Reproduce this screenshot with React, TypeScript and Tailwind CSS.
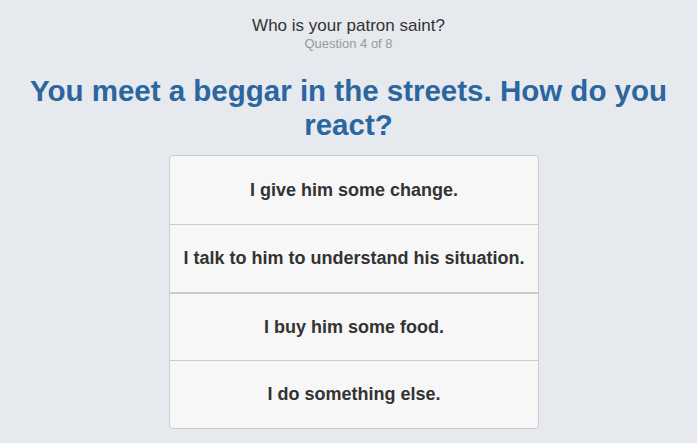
import React from 'react';

const answers = [
  "I give him some change.",
  "I talk to him to understand his situation.",
  "I buy him some food.",
  "I do something else.",
];

const App: React.FC = () => {
  return (
    <div className="min-h-[443px] bg-[#e6e9ee] font-['Liberation_Sans',Arial,sans-serif] text-[#333]">
      <div className="flex flex-col items-center pt-[16px]">
        <div className="text-[17px] leading-[20px]">Who is your patron saint?</div>
        <div className="text-[13px] leading-[16px] text-[#999]">Question 4 of 8</div>
      </div>
      <h2 className="mt-[22px] px-[20px] text-center text-[29.5px] font-bold leading-[34px] text-[#2b66a0]">
        You meet a beggar in the streets. How do you react?
      </h2>
      <div className="ml-[169px] mt-[13px] w-[370px] overflow-hidden rounded-[4px] border border-[#ccc] bg-[#f7f7f7]">
        {answers.map((a, i) => (
          <div
            key={a}
            className={
              "flex h-[68px] items-center justify-center text-[18px] font-bold " +
              (i === 0 ? "" : i === 2 ? "border-t-2 border-[#ccc]" : "border-t border-[#ccc]")
            }
          >
            {a}
          </div>
        ))}
      </div>
    </div>
  );
};

export default App;
